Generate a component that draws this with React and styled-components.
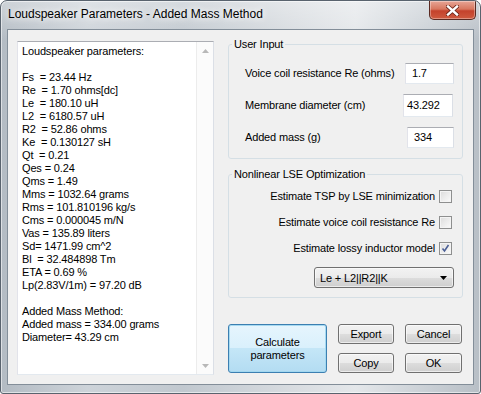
import React from 'react';
import styled, { createGlobalStyle } from 'styled-components';

const GlobalStyle = createGlobalStyle`
  html, body {
    margin: 0;
    padding: 0;
    background: #fff;
  }
  body {
    font-family: "Liberation Sans", Arial, sans-serif;
    font-size: 11px;
    letter-spacing: -0.15px;
    color: #000;
  }
`;

const Window = styled.div`
  width: 481px;
  height: 394px;
  box-sizing: border-box;
  display: flex;
  flex-direction: column;
  border: 1px solid #59636e;
  border-radius: 7px 7px 3px 3px;
  background:
    linear-gradient(to bottom, rgba(255, 255, 255, 0.35), rgba(255, 255, 255, 0) 40px),
    linear-gradient(to right, #b3bbc3 0%, #cdd3d9 18%, #c1c8cf 38%, #d9dde1 62%, #e4e7ea 74%, #c8ced4 90%, #b8bfc6 100%);
  box-shadow: inset 0 0 0 1px rgba(255, 255, 255, 0.55);
  overflow: hidden;
`;

const TitleBar = styled.div`
  height: 28px;
  flex: none;
  display: flex;
  align-items: flex-start;
`;

const Title = styled.div`
  margin: 6px 0 0 7px;
  font-size: 12px;
  line-height: 15px;
  letter-spacing: 0;
  color: #000;
  text-shadow: 0 0 6px #fff, 0 0 10px rgba(255, 255, 255, 0.9);
`;

const CloseButton = styled.div`
  margin-left: auto;
  margin-right: 4px;
  width: 47px;
  height: 19px;
  box-sizing: border-box;
  border: 1px solid #5a2a22;
  border-top: none;
  border-radius: 0 0 5px 5px;
  background: linear-gradient(to bottom, #e7a596 0%, #d8775f 45%, #c4422c 55%, #cf5a3f 100%);
  box-shadow: inset 0 0 0 1px rgba(255, 255, 255, 0.35);
  display: flex;
  align-items: center;
  justify-content: center;
`;

const Client = styled.div`
  flex: 1;
  margin: 0 6px 8px;
  box-sizing: border-box;
  border: 1px solid #838e99;
  background: #f0f0f0;
  display: flex;
  align-items: flex-start;
  gap: 14px;
  padding: 8px 10px 0 9px;
`;

const Edit = styled.div`
  width: 197px;
  height: 334px;
  margin-top: 3px;
  box-sizing: border-box;
  border: 1px solid;
  border-color: #abadb3 #dbdfe6 #e3e9ef #e2e3ea;
  background: #fff;
  display: flex;
`;

const EditText = styled.div`
  flex: 1;
  padding: 3px 0 0 4px;
  font-size: 11px;
  line-height: 13px;
  white-space: pre;
  overflow: hidden;
`;

const ScrollBar = styled.div`
  width: 16px;
  flex: none;
  display: flex;
  flex-direction: column;
  justify-content: space-between;
  background: #fbfbfb;
  border-left: 1px solid #ececec;
`;

const ScrollArrow = styled.div`
  height: 17px;
  display: flex;
  align-items: center;
  justify-content: center;
`;

const RightCol = styled.div`
  width: 235px;
  display: flex;
  flex-direction: column;
`;

const Group = styled.fieldset`
  margin: ${p => p.$top || 0}px 0 0;
  padding: 0;
  min-width: 0;
  border: 1px solid #d5dfe5;
  border-radius: 3px;
`;

const Legend = styled.legend`
  margin-left: 3px;
  padding: 0 2px;
  font-size: 11px;
  line-height: 13px;
`;

const GroupBody = styled.div`
  display: flex;
  flex-direction: column;
  padding: ${p => p.$pad};
`;

const InputRow = styled.div`
  height: 32px;
  display: flex;
  align-items: center;
  justify-content: space-between;
`;

const TextInput = styled.div`
  width: ${p => p.$w}px;
  height: ${p => p.$h || 21}px;
  margin-right: ${p => p.$mr || 0}px;
  box-sizing: border-box;
  border: 1px solid;
  border-color: #abadb3 #dbdfe6 #e3e9ef #e2e3ea;
  background: #fff;
  padding-left: ${p => p.$pl || 5}px;
  display: flex;
  align-items: center;
`;

const CheckRow = styled.div`
  height: 26px;
  display: flex;
  align-items: center;
  justify-content: flex-end;
  gap: 4px;
  padding-right: 2px;
`;

const Checkbox = styled.div`
  width: 13px;
  height: 13px;
  box-sizing: border-box;
  border: 1px solid #8e8f8f;
  background: linear-gradient(135deg, #dcdcdc, #fbfbfb);
  box-shadow: inset 0 0 0 1px #f4f4f4;
  display: flex;
  align-items: center;
  justify-content: center;
`;

const Combo = styled.div`
  align-self: flex-end;
  width: 140px;
  height: 21px;
  margin-top: 6px;
  box-sizing: border-box;
  border: 1px solid #707070;
  border-radius: 3px;
  background: linear-gradient(to bottom, #f2f2f2 0%, #ebebeb 50%, #dddddd 50%, #cfcfcf 100%);
  box-shadow: inset 0 0 0 1px rgba(255, 255, 255, 0.6);
  display: flex;
  align-items: center;
  justify-content: space-between;
  padding: 0 6px 0 5px;
`;

const ButtonGrid = styled.div`
  margin-top: 26px;
  display: grid;
  grid-template-columns: 99px 56px 57px;
  grid-template-rows: 20px 20px;
  column-gap: 11px;
  row-gap: 9px;
`;

const Button = styled.div`
  box-sizing: border-box;
  border: 1px solid ${p => (p.$default ? '#3c7fb1' : '#707070')};
  border-radius: 3px;
  background: ${p =>
    p.$default
      ? 'linear-gradient(to bottom, #e6f5fd 0%, #d9f0fc 50%, #c4e6f7 50%, #b3dcf2 100%)'
      : 'linear-gradient(to bottom, #f2f2f2 0%, #ebebeb 50%, #dddddd 50%, #cfcfcf 100%)'};
  box-shadow: inset 0 0 0 1px ${p => (p.$default ? 'rgba(160, 215, 240, 0.9)' : 'rgba(255, 255, 255, 0.6)')};
  grid-row: ${p => (p.$tall ? 'span 2' : 'auto')};
  display: flex;
  align-items: center;
  justify-content: center;
  text-align: center;
  font-size: 11px;
  line-height: 13px;
`;

const report = [
  'Loudspeaker parameters:',
  '',
  'Fs  = 23.44 Hz',
  'Re  = 1.70 ohms[dc]',
  'Le  = 180.10 uH',
  'L2  = 6180.57 uH',
  'R2  = 52.86 ohms',
  'Ke  = 0.130127 sH',
  'Qt  = 0.21',
  'Qes = 0.24',
  'Qms = 1.49',
  'Mms = 1032.64 grams',
  'Rms = 101.810196 kg/s',
  'Cms = 0.000045 m/N',
  'Vas = 135.89 liters',
  'Sd= 1471.99 cm^2',
  'Bl  = 32.484898 Tm',
  'ETA = 0.69 %',
  'Lp(2.83V/1m) = 97.20 dB',
  '',
  'Added Mass Method:',
  'Added mass = 334.00 grams',
  'Diameter= 43.29 cm',
].join('\n');

const inputs = [
  { label: 'Voice coil resistance Re (ohms)', value: '1.7', w: 49, mr: 0, pl: 6 },
  { label: 'Membrane diameter (cm)', value: '43.292', w: 50, mr: 1, h: 23, pl: 3 },
  { label: 'Added mass (g)', value: '334', w: 47, mr: 0, pl: 6 },
];

const options = [
  { label: 'Estimate TSP by LSE minimization', checked: false },
  { label: 'Estimate voice coil resistance Re', checked: false },
  { label: 'Estimate lossy inductor model', checked: true },
];

const Triangle = ({ up, color }) => (
  <svg width="7" height="4" viewBox="0 0 7 4">
    <polygon points={up ? '0,4 7,4 3.5,0' : '0,0 7,0 3.5,4'} fill={color} />
  </svg>
);

export default function App() {
  return (
    <>
      <GlobalStyle />
      <Window>
        <TitleBar>
          <Title>Loudspeaker Parameters - Added Mass Method</Title>
          <CloseButton>
            <svg width="13" height="11" viewBox="0 0 13 11">
              <path d="M2 1.5 L11 9.5 M11 1.5 L2 9.5" stroke="#6b2418" strokeWidth="4" strokeLinecap="square" />
              <path d="M2 1.5 L11 9.5 M11 1.5 L2 9.5" stroke="#fff" strokeWidth="2.4" strokeLinecap="square" />
            </svg>
          </CloseButton>
        </TitleBar>
        <Client>
          <Edit>
            <EditText>{report}</EditText>
            <ScrollBar>
              <ScrollArrow><Triangle up color="#b8b8b8" /></ScrollArrow>
              <ScrollArrow><Triangle color="#b8b8b8" /></ScrollArrow>
            </ScrollBar>
          </Edit>
          <RightCol>
            <Group>
              <Legend>User Input</Legend>
              <GroupBody $pad="6px 8px 5px 16px">
                {inputs.map(i => (
                  <InputRow key={i.label}>
                    <span>{i.label}</span>
                    <TextInput $w={i.w} $mr={i.mr} $h={i.h} $pl={i.pl}>{i.value}</TextInput>
                  </InputRow>
                ))}
              </GroupBody>
            </Group>
            <Group $top={9}>
              <Legend>Nonlinear LSE Optimization</Legend>
              <GroupBody $pad="2px 8px 9px 16px">
                {options.map(o => (
                  <CheckRow key={o.label}>
                    <span>{o.label}</span>
                    <Checkbox>
                      {o.checked && (
                        <svg width="9" height="9" viewBox="0 0 9 9">
                          <path d="M1.5 4.5 L3.5 7 L7.5 1" stroke="#4b5f95" strokeWidth="1.6" fill="none" />
                        </svg>
                      )}
                    </Checkbox>
                  </CheckRow>
                ))}
                <Combo>
                  <span>Le + L2||R2||K</span>
                  <Triangle color="#000" />
                </Combo>
              </GroupBody>
            </Group>
            <ButtonGrid>
              <Button $default $tall>Calculate<br />parameters</Button>
              <Button>Export</Button>
              <Button>Cancel</Button>
              <Button>Copy</Button>
              <Button>OK</Button>
            </ButtonGrid>
          </RightCol>
        </Client>
      </Window>
    </>
  );
}
